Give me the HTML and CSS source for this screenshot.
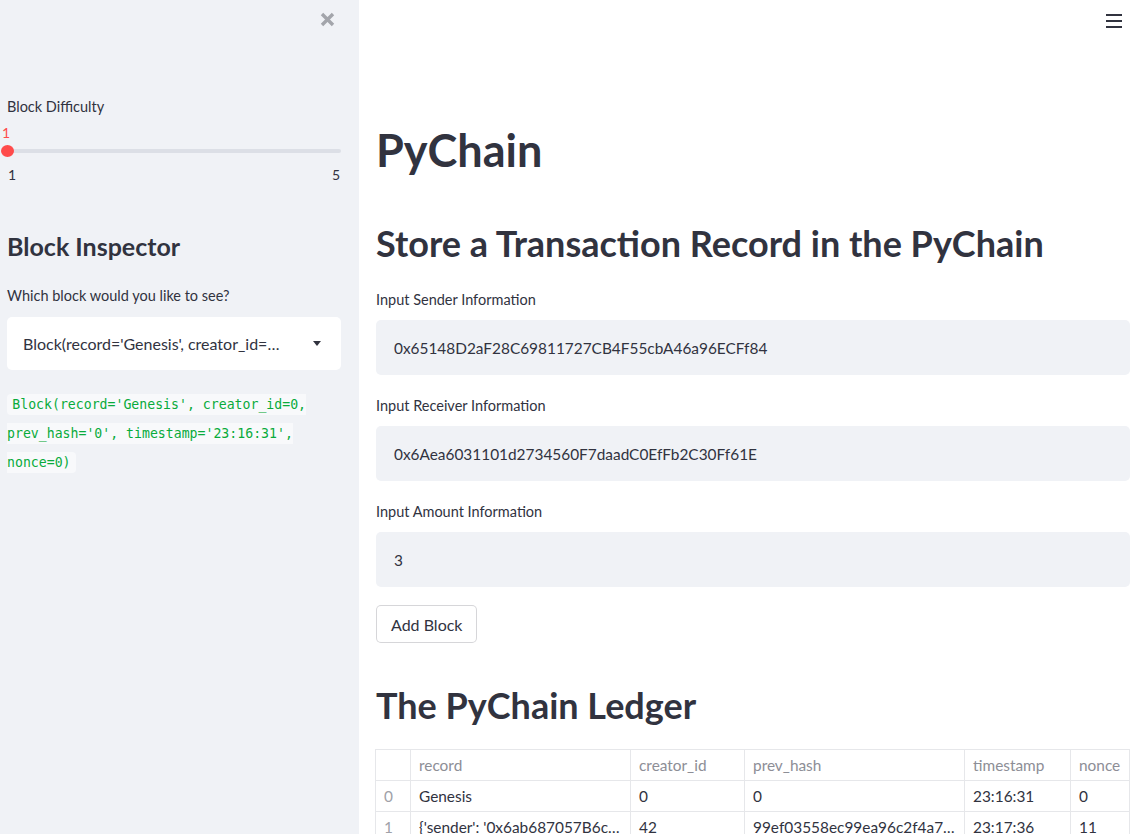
FILE: index.html
```html
<!DOCTYPE html>
<html lang="en">
<head>
<meta charset="utf-8">
<title>PyChain</title>
<link rel="stylesheet" href="styles.css">
</head>
<body>
<div class="app">
  <aside class="sidebar">
    <div class="sb-top">
      <button class="close-btn" aria-label="Close sidebar">
        <svg width="15" height="15" viewBox="0 0 15 15"><path d="M2 2 L13 13 M13 2 L2 13" stroke="#a3a5ab" stroke-width="3.4" stroke-linecap="butt" fill="none"/></svg>
      </button>
    </div>
    <div class="sb-content">
      <div class="wlabel">Block Difficulty</div>
      <div class="slider">
        <div class="slider-value">1</div>
        <div class="track-row">
          <div class="track"></div>
          <div class="thumb"></div>
        </div>
        <div class="ticks"><span>1</span><span>5</span></div>
      </div>
      <h2 class="sb-h2">Block Inspector</h2>
      <div class="wlabel">Which block would you like to see?</div>
      <div class="select">
        <span class="select-text">Block(record='Genesis', creator_id=0, prev_hash='0', timestamp='23:16:31', nonce=0)</span>
        <svg class="caret" width="8" height="5" viewBox="0 0 8 5"><path d="M0 0 H8 L4 5 Z" fill="#31333f"/></svg>
      </div>
      <p class="code-p"><code>Block(record='Genesis', creator_id=0, prev_hash='0', timestamp='23:16:31', nonce=0)</code></p>
    </div>
  </aside>
  <main class="main">
    <header class="topbar">
      <svg width="16" height="14" viewBox="0 0 16 14"><rect x="0" y="0" width="16" height="2" fill="#31333f"/><rect x="0" y="6" width="16" height="2" fill="#31333f"/><rect x="0" y="12" width="16" height="2" fill="#31333f"/></svg>
    </header>
    <div class="content">
      <h1 class="h1">PyChain</h1>
      <h2 class="h2">Store a Transaction Record in the PyChain</h2>
      <div class="field">
        <div class="wlabel">Input Sender Information</div>
        <div class="input">0x65148D2aF28C69811727CB4F55cbA46a96ECFf84</div>
      </div>
      <div class="field">
        <div class="wlabel">Input Receiver Information</div>
        <div class="input">0x6Aea6031101d2734560F7daadC0EfFb2C30Ff61E</div>
      </div>
      <div class="field">
        <div class="wlabel">Input Amount Information</div>
        <div class="input">3</div>
      </div>
      <button class="btn">Add Block</button>
      <h2 class="h2 ledger">The PyChain Ledger</h2>
      <table class="df">
        <colgroup>
          <col class="c-idx"><col class="c-rec"><col class="c-cre"><col class="c-prev"><col class="c-ts"><col class="c-non">
        </colgroup>
        <thead>
          <tr><th></th><th>record</th><th>creator_id</th><th>prev_hash</th><th>timestamp</th><th>nonce</th></tr>
        </thead>
        <tbody>
          <tr><th>0</th><td>Genesis</td><td>0</td><td>0</td><td>23:16:31</td><td>0</td></tr>
          <tr><th>1</th><td>{'sender': '0x6ab687057B6c1e2d8b0dB6d7a', 'receiver'}</td><td>42</td><td>99ef03558ec99ea96c2f4a7b2e0d1c</td><td>23:17:36</td><td>11</td></tr>
        </tbody>
      </table>
    </div>
  </main>
</div>
</body>
</html>
```
FILE: styles.css
```css
* { box-sizing: border-box; }
html, body { margin: 0; padding: 0; height: 100%; }
body {
  font-family: Lato, "Noto Sans", sans-serif;
  color: #31333f;
  background: #fff;
  overflow: hidden;
}
.app { display: flex; height: 834px; overflow: hidden; }

/* sidebar */
.sidebar {
  width: 359px;
  flex: 0 0 359px;
  background: #f0f2f6;
  display: flex;
  flex-direction: column;
}
.sb-top {
  height: 39px;
  flex: 0 0 39px;
  display: flex;
  justify-content: flex-end;
  align-items: flex-start;
  padding: 12px 24px 0 0;
}
.close-btn {
  border: 0; background: none; padding: 0; margin: 0;
  width: 15px; height: 15px; display: block;
}
.close-btn svg { display: block; }
.sb-content { padding: 57px 18px 0 7px; }
.wlabel { font-size: 14.5px; line-height: 21px; color: #31333f; }
.slider { margin-top: 8px; }
.slider-value { color: #ff4b4b; font-size: 14px; line-height: 16px; height: 16px; margin-left: -5px; }
.track-row { position: relative; height: 20px; display: flex; align-items: center; }
.track { height: 4px; width: 100%; background: #dcdfe6; border-radius: 2px; }
.thumb {
  position: absolute; left: -6px; top: 4px;
  width: 13px; height: 12px; border-radius: 50%; background: #ff4b4b;
}
.ticks { display: flex; justify-content: space-between; margin-top: 4px; font-size: 14px; line-height: 20px; padding: 0 1px 0 1px; }
.sb-h2 { margin: 46px 0 0; font-size: 25px; line-height: 31px; font-weight: 700; }
.sb-h2 + .wlabel { margin-top: 23px; }
.select {
  margin-top: 11px;
  height: 53px;
  background: #fff;
  border-radius: 5px;
  display: flex;
  align-items: center;
  padding: 0 20px 0 16px;
}
.select-text { max-width: 265px; min-width: 0; white-space: nowrap; overflow: hidden; text-overflow: ellipsis; font-size: 16px; }
.caret { flex: 0 0 8px; margin-left: auto; }
.code-p { margin: 20px 0 0; line-height: 29px; font-size: 13.3px; }
.code-p code {
  font-family: "DejaVu Sans Mono", "Liberation Mono", monospace;
  font-size: 13.2px;
  color: #09ab3b;
  background: #f8f9fb;
  padding: 0.2em 0.4em;
  border-radius: 4px;
}

/* main */
.main { flex: 1; min-width: 0; display: flex; flex-direction: column; overflow: hidden; }
.topbar { height: 42px; flex: 0 0 42px; display: flex; justify-content: flex-end; padding: 14px 15px 0 0; }
.topbar svg { display: block; }
.content { flex: 0 0 auto; padding: 0 7px 0 17px; }
.h1 { margin: 79px 0 0; font-size: 45px; line-height: 58px; font-weight: 700; }
.h2 { margin: 43px 0 0; font-size: 36px; line-height: 43px; font-weight: 700; }
.h2 + .field { margin-top: 24px; }
.field + .field { margin-top: 20px; }
.field .wlabel { margin-bottom: 10px; }
.input {
  height: 55px;
  background: #f0f2f6;
  border-radius: 5px;
  display: flex;
  align-items: center;
  padding-left: 18px;
  font-size: 15.4px;
}
.btn {
  margin-top: 18px;
  height: 38px;
  padding: 0 14px;
  background: #fff;
  border: 1px solid rgba(49, 51, 63, 0.2);
  border-radius: 5px;
  font-family: inherit;
  font-size: 16px;
  color: #31333f;
  display: block;
}
.ledger { margin-top: 41px; }
.df {
  margin-top: 22px;
  width: 754px;
  margin-left: -1px;
  border-collapse: collapse;
  table-layout: fixed;
  font-size: 15.4px;
}
.c-idx { width: 35px; } .c-rec { width: 220px; } .c-cre { width: 114px; }
.c-prev { width: 220px; } .c-ts { width: 106px; } .c-non { width: 59px; }
.df th, .df td {
  border: 1px solid #e6e7ea;
  height: 31px;
  padding: 0 5px 0 8px;
  text-align: left;
  font-weight: 400;
  white-space: nowrap;
  overflow: hidden;
  text-overflow: ellipsis;
}
.df thead th { color: #8d8e96; }
.df tbody th { color: #a0a1a8; }
```
